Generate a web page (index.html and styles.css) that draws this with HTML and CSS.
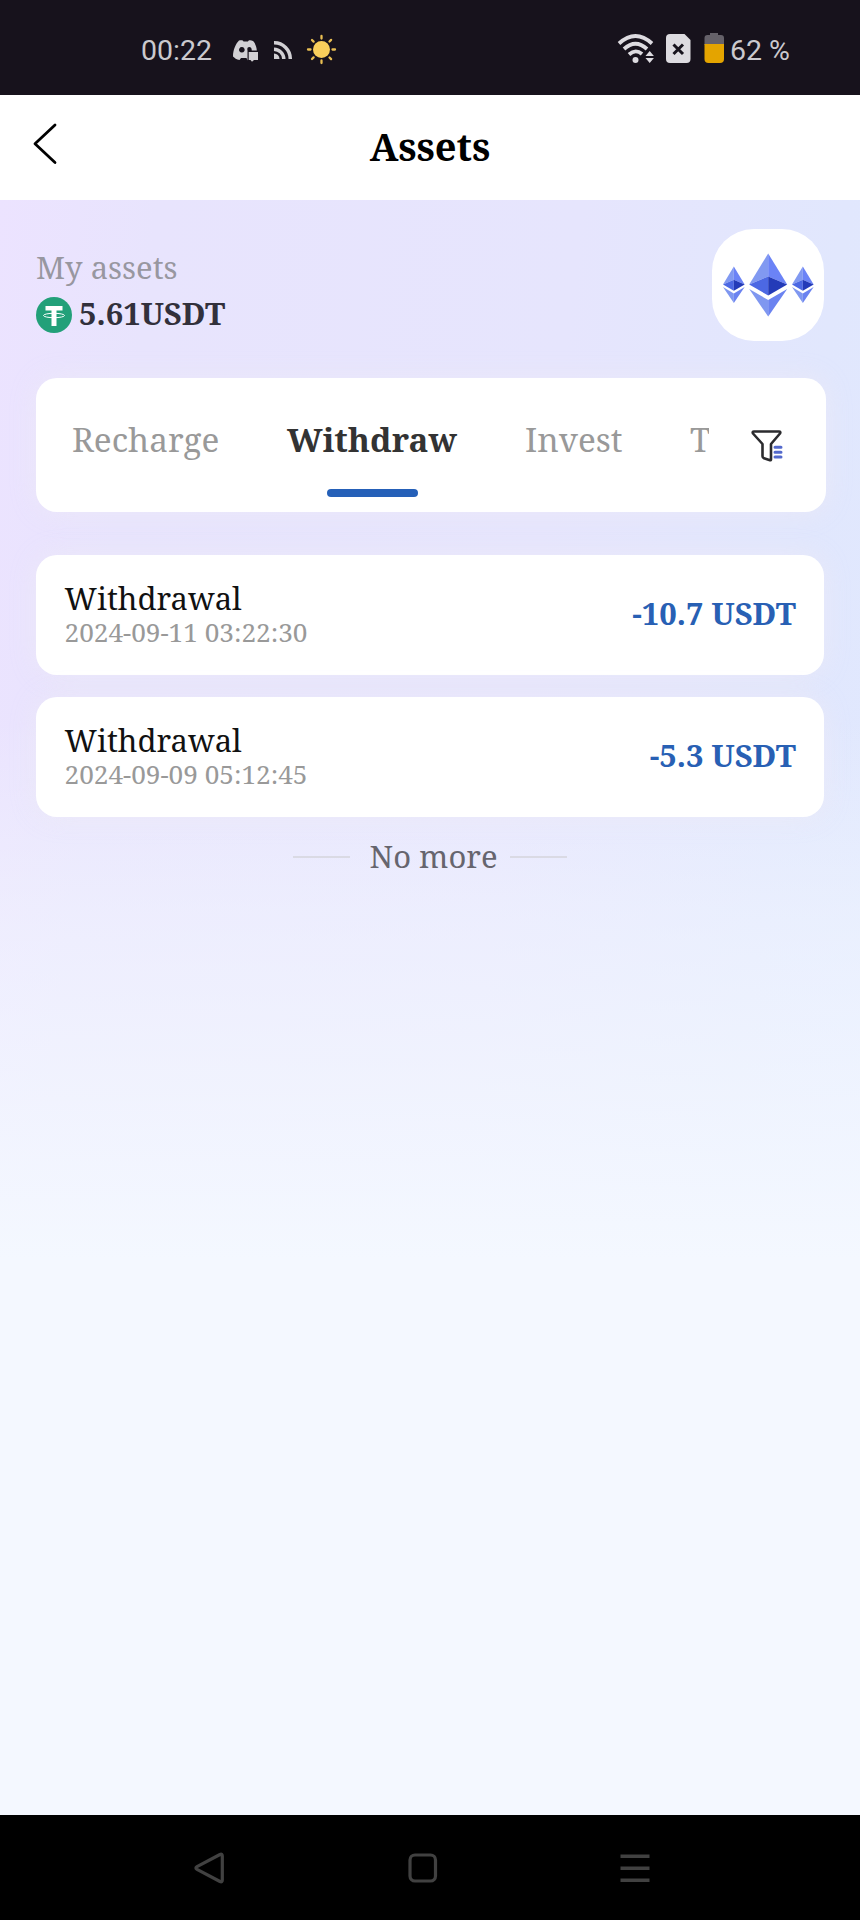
FILE: index.html
```html
<!DOCTYPE html>
<html lang="en">
<head>
<meta charset="utf-8">
<title>Assets</title>
<link rel="stylesheet" href="styles.css">
</head>
<body>
<div class="screen">
  <div class="status">
    <span class="clock">00:22</span>
    <svg class="status-left" width="110" height="40" viewBox="230 30 110 40">
      <path fill="#d2d0d4" fill-rule="evenodd" d="M239 40.500C241 40 243 39.800 243.500 41.500H248C248.500 39.800 251 40 253 41C255.500 43.500 256.600 47 256.800 50.500H247.500V60.500L246.500 58H241L239.500 60C236.500 59.500 234.500 58 233 56.500C233 50 235.500 44 239 40.500ZM241.800 47a2.800 2.800 0 1 0 .1 0ZM249.300 47c-1.700 0-2.300 1.500-1.800 3.500h4.200c.2-2-.8-3.500-2.400-3.500Z"/>
      <path fill="#d2d0d4" d="M248.700 52h9.300v8h-4l-2 1.800-1.500-1.800h-1.800z"/>
      <g fill="none" stroke="#d2d0d4" stroke-width="3.500"><path d="M274 42.800A16 16 0 0 1 290.300 59M274 49.200A10 10 0 0 1 283.800 59"/></g>
      <path fill="#d2d0d4" d="M274 53.500a5.500 5.500 0 0 1 5.500 5.500H274z"/>
      <circle cx="321.500" cy="49.500" r="8.500" fill="#f9cf5b"/>
      <path stroke="#e9be52" stroke-width="2.300" stroke-linecap="round" d="M321.500 36v2.500M321.500 60.500V63M308 49.500h2.500M332.500 49.500h2.500M312 40l1.600 1.600M329.500 57.500l1.600 1.600M312 59l1.600-1.600M329.500 41.500l1.600-1.600"/>
    </svg>
    <svg class="status-right" width="112" height="40" viewBox="615 30 112 40">
      <g fill="none" stroke="#dddbe0" stroke-width="3.800"><path d="M619 43.500Q635.500 28.500 652 43.500M624 49Q635.500 38.500 647 49M629 54.500Q635.500 48.500 642 54"/></g>
      <circle cx="635.500" cy="60" r="3" fill="#dddbe0"/>
      <path fill="#dddbe0" d="M645.500 56l4.200-5 4.200 5zM645.500 58l4.200 5 4.200-5z"/>
      <path fill="#dddbe0" d="M670 34h14.500l6 6v19a4 4 0 0 1-4 4h-16.500a4 4 0 0 1-4-4V38a4 4 0 0 1 4-4z"/>
      <path stroke="#17131d" stroke-width="3" d="M673.500 44.500l9.500 9.500M683 44.500l-9.500 9.500"/>
      <path fill="#656169" d="M710 33h8v2h3a3 3 0 0 1 3 3v7h-19.500v-7a3 3 0 0 1 3-3h2.500z"/>
      <path fill="#e4a400" d="M704.500 44h19.500v15a4 4 0 0 1-4 4h-11.500a4 4 0 0 1-4-4z"/>
    </svg>
    <span class="percent">62 %</span>
  </div>

  <header class="header">
    <svg class="back" width="26" height="44" viewBox="32 122 26 44"><path fill="none" stroke="#000" stroke-width="2.800" stroke-linecap="round" stroke-linejoin="round" d="M55 125L35 143.800L55 162.500"/></svg>
    <h1 class="title">Assets</h1>
  </header>

  <main class="content">
    <section class="profile">
      <div class="holdings">
        <div class="label">My assets</div>
        <div class="balance">
          <svg width="36" height="36" viewBox="0 0 36 36"><circle cx="18" cy="18" r="18" fill="#22a079"/><path fill="#fff" d="M9.500 9h17v4.500h-6V29h-5V13.500h-6z"/><ellipse cx="18" cy="18.500" rx="10.500" ry="2.200" fill="none" stroke="#fff" stroke-width="1"/></svg>
          <span class="balance-value">5.61USDT</span>
        </div>
      </div>
      <div class="avatar">
        <svg width="92" height="66" viewBox="0 0 92 66">
          <defs>
            <g id="eth">
              <path fill="#8199f1" d="M19 0L0 31l19-8z"/><path fill="#6b83f6" d="M19 0l19 31-19-8z"/>
              <path fill="#4c68e3" d="M19 23L0 31l19 11z"/><path fill="#243bb8" d="M19 23l19 8-19 11z"/>
              <path fill="#7f97f0" d="M0 35.500l19 11V63z"/><path fill="#6b83f0" d="M38 35.500l-19 11V63z"/>
            </g>
          </defs>
          <use href="#eth" transform="translate(1 14.500) scale(.57 .58)"/>
          <use href="#eth" transform="translate(27.200 1.500)"/>
          <use href="#eth" transform="translate(70 14.500) scale(.57 .58)"/>
        </svg>
      </div>
    </section>

    <nav class="tabs">
      <div class="tab-strip">
        <span class="tab recharge">Recharge</span>
        <span class="tab active">Withdraw</span>
        <span class="tab invest">Invest</span>
        <span class="tab cut">T</span>
      </div>
      <svg class="filter" width="32" height="34" viewBox="0 0 32 34"><path fill="none" stroke="#2b2b2e" stroke-width="2.600" stroke-linejoin="round" d="M3 2.500h25q2 0 1 2L20 15v15.500q0 1-1 .7l-6-2q-1.500-.5-1.500-2V15L2 4.500q-1-2 1-2z"/><path stroke="#5369cc" stroke-width="3" stroke-linecap="round" d="M24 18.300h6M24 23.200h6M24 28h6"/></svg>
    </nav>

    <section class="records">
      <article class="record">
        <div><div class="kind">Withdrawal</div><div class="date">2024-09-11 03:22:30</div></div>
        <div class="amount">-10.7 USDT</div>
      </article>
      <article class="record">
        <div><div class="kind">Withdrawal</div><div class="date">2024-09-09 05:12:45</div></div>
        <div class="amount">-5.3 USDT</div>
      </article>
    </section>
    <div class="end"><i class="rule"></i><span class="end-text">No more</span><i class="rule"></i></div>
  </main>

  <footer class="navbar">
    <svg width="32" height="34" viewBox="0 0 32 34"><path fill="none" stroke="#414141" stroke-width="3.200" stroke-linejoin="round" d="M27 3.500Q29.300 2.500 29.300 5V29Q29.300 31.500 27 30.500L4 18.300Q1.800 17 4 15.700z"/></svg>
    <svg width="32" height="34" viewBox="0 0 32 34"><rect x="4" y="4" width="25.500" height="26" rx="5" fill="none" stroke="#414141" stroke-width="3.200"/></svg>
    <svg width="32" height="34" viewBox="0 0 32 34"><path stroke="#414141" stroke-width="3.600" d="M1.500 5.200h29M1.500 17.200h29M1.500 29.200h29"/></svg>
  </footer>
</div>
</body>
</html>
```
FILE: styles.css
```css
* { box-sizing: border-box; }
body { margin: 0; }
svg { display: block; flex: none; }
.screen {
  width: 860px;
  height: 1920px;
  display: flex;
  flex-direction: column;
  overflow: hidden;
  font-family: "Noto Serif", "DejaVu Serif Condensed", "DejaVu Serif", serif;
  white-space: nowrap;
}
.status {
  height: 95px;
  display: flex;
  align-items: center;
  padding: 5px 72px 0 141px;
  background: #17121c;
  font-family: Roboto, sans-serif;
  font-size: 28.500px;
  color: #cbc9ce;
}
.clock { width: 89px; }
.status-right { margin-left: auto; margin-right: 3px; }
.percent { width: 58px; }
.header {
  height: 105px;
  display: flex;
  align-items: center;
  padding: 0 0 3px 32px;
  background: #fff;
}
.back { margin-bottom: 4px; }
.title {
  flex: 1;
  margin: 0 58px 0 0;
  text-align: center;
  font-size: 38px;
  line-height: 50px;
}
.content {
  flex: 1;
  padding: 29px 34px 0 36px;
  background:
    linear-gradient(180deg, rgba(244,248,255,0) 0, rgba(244,248,255,0) 520px, rgba(244,248,255,.45) 710px, #f4f8ff 1060px),
    linear-gradient(97deg, #ece3ff 0, #e8e4fd 15%, #e6e5fd 55%, #e1e7fd 80%, #e0e9ff 100%);
}
.profile {
  height: 149px;
  display: flex;
  justify-content: space-between;
  padding-right: 2px;
}
.label {
  height: 43px;
  margin-top: 17px;
  line-height: 43px;
  font-size: 31px;
  color: #9897a0;
}
.balance {
  height: 52px;
  display: flex;
  align-items: center;
  gap: 7px;
}
.balance-value {
  padding-bottom: 4px;
  font-size: 31px;
  font-weight: 700;
  color: #32303b;
}
.avatar {
  width: 112px;
  height: 112px;
  display: flex;
  align-items: center;
  justify-content: center;
  border-radius: 42px;
  background: #fff;
}
.tabs {
  height: 134px;
  display: flex;
  border-radius: 21px;
  background: #fff;
  box-shadow: 0 0 26px rgba(236,234,248,.8);
}
.tab-strip {
  width: 673px;
  display: flex;
  gap: 68px;
  padding: 38px 0 0 36px;
  overflow: hidden;
}
.tab {
  flex: none;
  font-size: 33.300px;
  line-height: 46px;
  color: #999;
}
.recharge { width: 147px; }
.invest { width: 97px; }
.active {
  width: 170px;
  display: flex;
  flex-direction: column;
  align-items: center;
  font-weight: 700;
  color: #333;
}
.active::after {
  content: "";
  width: 91px;
  height: 8px;
  margin-top: 27px;
  border-radius: 4px;
  background: #2560b8;
}
.filter { margin: 51px 0 0 42px; }
.records {
  display: grid;
  gap: 21.500px;
  margin: 43px 2px 0 0;
}
.record {
  height: 120px;
  display: flex;
  justify-content: space-between;
  padding: 23px 28px 0 28.500px;
  border-radius: 21px;
  background: #fff;
  box-shadow: 0 0 26px rgba(236,234,248,.8);
}
.kind { height: 38px; line-height: 40px; font-size: 31px; color: #111; }
.date { height: 32px; line-height: 32px; font-size: 26.200px; color: #999; }
.amount { padding-top: 15px; line-height: 40px; font-size: 31px; font-weight: 700; color: #2860b4; }
.end {
  height: 80px;
  display: flex;
  align-items: center;
  justify-content: center;
  padding-right: 3px;
}
.end-text { width: 128px; margin: 0 12px 0 20px; padding-bottom: 2px; font-size: 31px; color: #66656e; }
.rule { width: 57px; height: 2px; background: #dadae4; }
.navbar {
  height: 105px;
  display: flex;
  justify-content: space-between;
  padding: 36px 209px 0 193px;
  background: #000;
}
```
